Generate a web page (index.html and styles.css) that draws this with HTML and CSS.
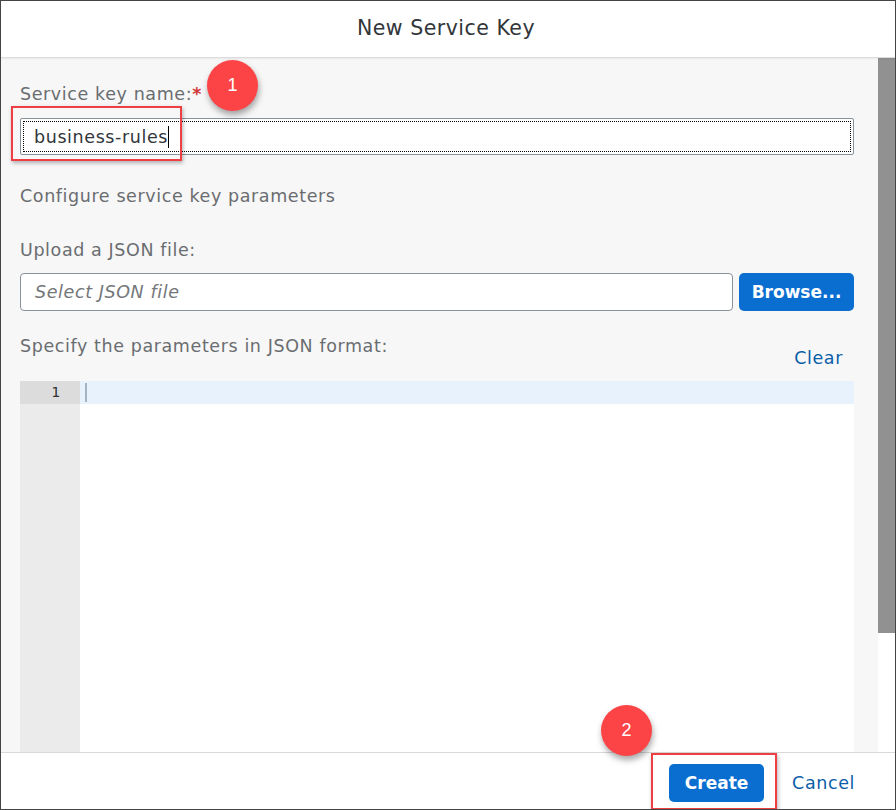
FILE: index.html
```html
<!DOCTYPE html>
<html>
<head>
<meta charset="utf-8">
<link rel="stylesheet" href="styles.css">
</head>
<body>
<div class="frame">
  <header class="header"><h1 class="title">New Service Key</h1></header>
  <div class="content">
    <div class="main">
      <div class="label">Service key name:<span class="req">*</span></div>
      <div class="text-input focused"><span class="value">business-rules</span><span class="caret"></span></div>
      <div class="label section">Configure service key parameters</div>
      <div class="label upload">Upload a JSON file:</div>
      <div class="file-row">
        <div class="text-input file"><span class="placeholder">Select JSON file</span></div>
        <button class="btn primary browse">Browse...</button>
      </div>
      <div class="spec-row">
        <div class="label">Specify the parameters in JSON format:</div>
        <a class="link clear">Clear</a>
      </div>
      <div class="editor">
        <div class="gutter"><div class="ln active">1</div></div>
        <div class="code"><div class="line active"><span class="ecaret"></span></div></div>
      </div>
    </div>
    <div class="scrollbar"><div class="thumb"></div></div>
  </div>
  <footer class="footer">
    <button class="btn primary create">Create</button>
    <button class="btn ghost">Cancel</button>
  </footer>
  <div class="mark mark-name"></div>
  <div class="mark mark-create"></div>
  <div class="badge badge-1">1</div>
  <div class="badge badge-2">2</div>
</div>
</body>
</html>
```

FILE: styles.css
```css
* { box-sizing: border-box; }
html, body { margin: 0; padding: 0; background: #fff; }
body { font-family: "DejaVu Sans", "Noto Sans", sans-serif; }
.frame {
  position: relative;
  width: 896px;
  height: 810px;
  border: 1px solid #454545;
  display: flex;
  flex-direction: column;
  overflow: hidden;
}
.header {
  height: 57px;
  flex: none;
  background: #fff;
  border-bottom: 1px solid #dcdcdc;
  box-shadow: 0 1px 2px rgba(0,0,0,0.06);
  display: flex;
  align-items: center;
  justify-content: center;
  position: relative;
  z-index: 1;
}
.title {
  margin: 0 4px 2px 0;
  font-weight: 400;
  font-size: 20.5px;
  letter-spacing: 0.5px;
  color: #32363a;
}
.content {
  flex: 1;
  display: flex;
  background: #f7f7f7;
  min-height: 0;
}
.main {
  flex: 1;
  padding: 25px 24px 0 19px;
  display: flex;
  flex-direction: column;
  min-width: 0;
}
.scrollbar {
  width: 17px;
  flex: none;
  background: #fff;
  display: flex;
  flex-direction: column;
}
.thumb { height: 575px; background: #919191; }
.label {
  font-size: 17.5px;
  letter-spacing: 0.6px;
  line-height: 22px;
  color: #6a6d70;
}
.req { color: #d0393d; font-weight: 700; margin-left: 0; }
.text-input {
  margin-top: 13px;
  height: 37px;
  background: #fff;
  border: 1px solid #89919a;
  border-radius: 2px;
  display: flex;
  align-items: center;
  padding-left: 13px;
  font-size: 17.5px;
  letter-spacing: 0.6px;
  color: #32363a;
  position: relative;
}
.text-input.focused::after {
  content: "";
  position: absolute;
  inset: 2px;
  border: 1px dotted #000;
}
.caret { width: 1px; height: 22px; background: #000; margin-left: 0; }
.section { margin-top: 30px; }
.upload { margin-top: 32px; }
.file-row { display: flex; gap: 6px; margin-top: 12px; }
.text-input.file {
  margin-top: 0;
  flex: 1;
  height: 38px;
  border-radius: 4px;
  padding-left: 14px;
}
.placeholder { font-style: italic; color: #74777a; }
.btn {
  font-family: inherit;
  border: none;
  cursor: pointer;
}
.btn.primary {
  background: #0a6ed1;
  color: #fff;
  font-weight: 700;
  font-size: 17px;
  border-radius: 5px;
  height: 38px;
}
.browse { width: 115px; padding: 0; }
.spec-row {
  display: flex;
  justify-content: space-between;
  align-items: flex-start;
  margin-top: 24px;
}
.link {
  color: #0a5ea8;
  font-size: 17.5px;
  letter-spacing: 0.6px;
  line-height: 22px;
  margin-top: 12px;
  margin-right: 11px;
}
.editor {
  margin-top: 12px;
  flex: 1;
  display: flex;
  background: #fff;
}
.gutter { width: 60px; background: #ebebeb; flex: none; }
.ln {
  height: 23px;
  line-height: 23px;
  text-align: right;
  padding-right: 20px;
  font-family: "DejaVu Sans Mono", monospace;
  font-size: 14.5px;
  color: #333;
}
.ln.active { background: #dcdcdc; }
.code { flex: 1; }
.line { height: 23px; display: flex; align-items: center; padding-left: 5px; }
.line.active { background: #e8f2fd; }
.ecaret { width: 2px; height: 19px; background: #a4b3c4; }
.footer {
  height: 57px;
  flex: none;
  background: #fff;
  border-top: 1px solid #d9d9d9;
  display: flex;
  align-items: center;
  justify-content: flex-end;
  padding: 4px 28px 0 0;
  gap: 16px;
}
.create { width: 95px; padding: 0; }
.btn.ghost {
  background: transparent;
  color: #0a5ea8;
  font-size: 17.5px;
  letter-spacing: 0.6px;
  height: 38px;
  padding: 0 12px;
}
.mark {
  position: absolute;
  border: 2px solid #ef3f45;
  box-shadow: 1px 2px 4px rgba(0,0,0,0.3);
  z-index: 3;
}
.mark-name { left: 10px; top: 105px; width: 171px; height: 55px; }
.mark-create { left: 650px; top: 752px; width: 126px; height: 57px; }
.badge {
  position: absolute;
  width: 51px;
  height: 51px;
  border-radius: 50%;
  background: #fc4447;
  color: #fff;
  font-family: "Liberation Sans", Arial, sans-serif;
  font-size: 18px;
  display: flex;
  align-items: center;
  justify-content: center;
  box-shadow: 1px 4px 6px rgba(0,0,0,0.35);
  z-index: 4;
}
.badge-1 { left: 206px; top: 59px; }
.badge-2 { left: 600px; top: 704px; }
```
